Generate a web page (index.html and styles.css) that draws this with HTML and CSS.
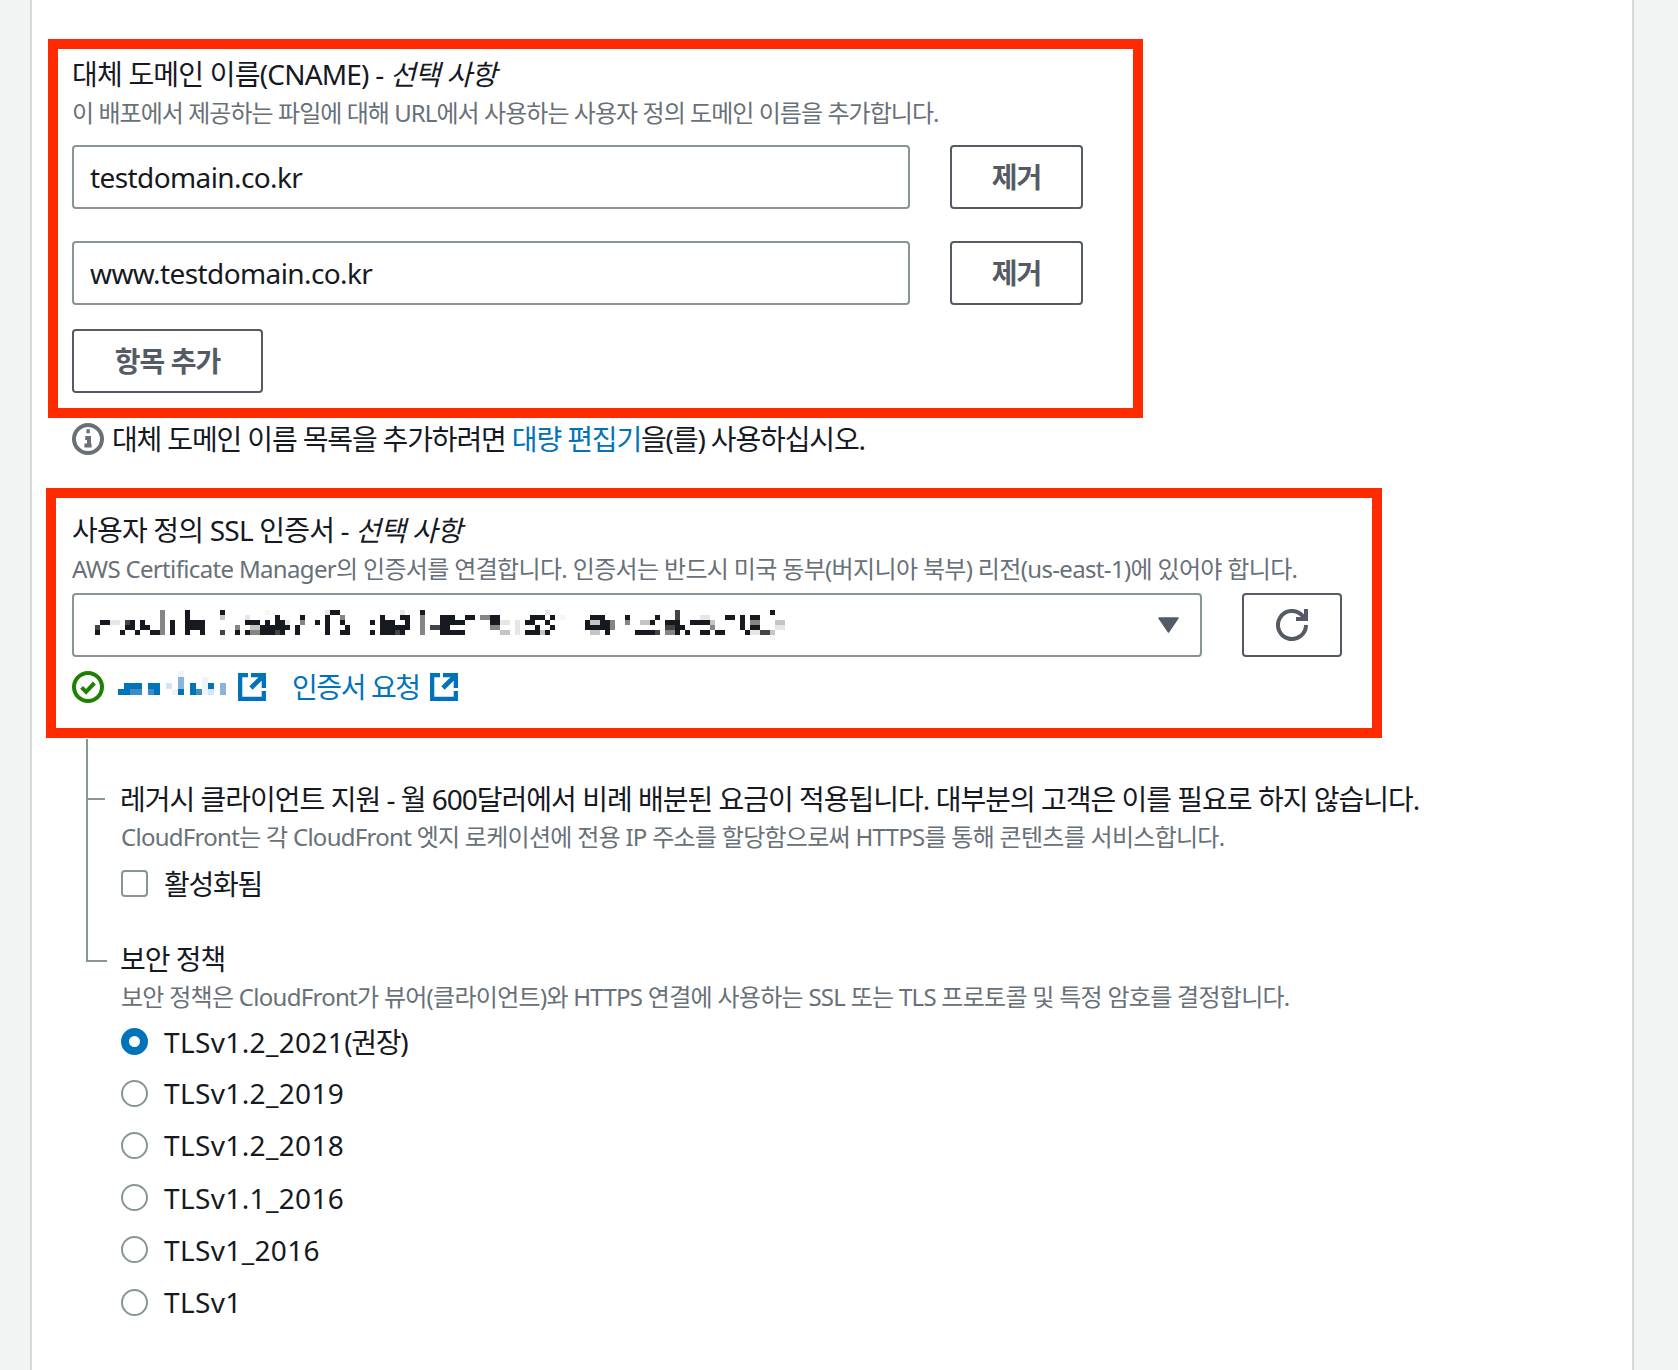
FILE: index.html
```html
<!DOCTYPE html>
<html lang="ko">
<head>
    <meta charset="UTF-8" />
    <title>CloudFront 배포 설정</title>
    <link rel="stylesheet" href="styles.css">
</head>
<body>
    <div class="panel">
        <section class="mark mark-cname">
            <div class="label">대체 도메인 이름(CNAME) - <i>선택 사항</i></div>
            <div class="desc">이 배포에서 제공하는 파일에 대해 URL에서 사용하는 사용자 정의 도메인 이름을 추가합니다.</div>
            <div class="cname-row">
                <input class="text-input" type="text" value="testdomain.co.kr">
                <button class="btn btn-remove">제거</button>
            </div>
            <div class="cname-row">
                <input class="text-input" type="text" value="www.testdomain.co.kr">
                <button class="btn btn-remove">제거</button>
            </div>
            <button class="btn btn-add">항목 추가</button>
        </section>

        <div class="info-row">
            <svg class="icon" viewBox="0 0 16 16" fill="none" stroke="#687078" stroke-width="2">
                <circle cx="8" cy="8" r="7" />
                <path d="M6.6 7.5h1.9v3.6 M6.2 11.3h3.6 M7.2 4.1h1.7" />
            </svg>
            <span class="info-text">대체 도메인 이름 목록을 추가하려면 <a href="#">대량 편집기</a>을(를) 사용하십시오.</span>
        </div>

        <section class="mark mark-ssl">
            <div class="label">사용자 정의 SSL 인증서 - <i>선택 사항</i></div>
            <div class="desc">AWS Certificate Manager의 인증서를 연결합니다. 인증서는 반드시 미국 동부(버지니아 북부) 리전(us-east-1)에 있어야 합니다.</div>
            <div class="select-row">
                <div class="select">
                    <svg class="mosaic-dark" viewBox="0 0 144 9" shape-rendering="crispEdges">
                        <path fill="#16191f" d="M3 4h2v1h-2z M2 6h1v1h-1z M9 4h1v2h-1z M8 5h2v1h-2z M11 4h1v1h-1z M11 5h2v1h-2z M7 6h1v1h-1z M10 6h1v1h-1z M13 6h2v1h-2z M17 4h1v3h-1z M20 2h1v5h-1z M21 4h3v2h-3z M23 6h1v1h-1z M27 2h1v1h-1z M30 6h1v1h-1z M32 4h3v1h-3z M32 6h1v1h-1z M35 6h3v1h-3z M36 4h1v1h-1z M35 5h4v1h-4z M38 3h1v1h-1z M38 4h2v1h-2z M39 5h2v1h-2z M39 6h1v1h-1z M43 3h1v1h-1z M42 5h1v2h-1z M46 4h1v1h-1z M49 2h2v1h-2z M48 3h1v4h-1z M51 4h1v1h-1z M52 5h1v1h-1z M51 6h2v1h-2z M57 4h1v1h-1z M57 6h1v1h-1z M59 3h1v1h-1z M63 3h2v1h-2z M59 4h3v1h-3z M64 4h1v1h-1z M59 5h6v1h-6z M59 6h3v1h-3z M63 6h1v1h-1z M67 2h1v1h-1z M71 3h1v4h-1z M72 3h2v1h-2z M76 3h2v1h-2z M81 3h2v1h-2z M72 4h4v1h-4z M72 5h1v1h-1z M72 6h4v1h-4z M81 4h2v2h-2z M89 3h3v1h-3z M93 3h1v1h-1z M88 4h2v1h-2z M92 4h1v1h-1z M90 5h1v1h-1z M93 5h1v1h-1z M88 6h3v1h-3z M92 6h1v1h-1z M101 3h3v1h-3z M100 4h1v1h-1z M103 4h2v1h-2z M100 5h5v1h-5z M104 6h1v1h-1z M108 3h1v1h-1z M114 3h1v1h-1z M113 4h1v1h-1z M110 6h4v1h-4z M116 4h3v1h-3z M118 5h2v1h-2z M118 6h1v1h-1z M120 6h1v1h-1z M123 6h2v1h-2z M126 6h2v1h-2z M121 4h4v1h-4z M128 3h2v1h-2z M131 3h1v3h-1z M133 3h2v1h-2z M133 5h2v1h-2z M132 6h1v1h-1z M137 2h1v1h-1z" />
                        <path fill="#444" d="M2 5h1v1h-1z M8 4h1v1h-1z M27 6h1v1h-1z M38 6h1v1h-1z M62 6h1v1h-1z M69 5h2v1h-2z M118 2h1v2h-1z M116 5h2v1h-2z M135 6h2v1h-2z M114 6h1v1h-1z" />
                        <path fill="#858585" d="M15 2h1v5h-1z M30 5h1v1h-1z M33 6h2v1h-2z M43 4h1v1h-1z M51 3h1v1h-1z M67 3h1v4h-1z M79 3h2v1h-2z M108 4h1v1h-1z M105 4h1v2h-1z M81 5h2v1h-2z M116 6h2v1h-2z M125 5h1v1h-1z M133 4h2v1h-2z" />
                        <path fill="#c4c4c4" d="M27 3h1v1h-1z M33 5h2v1h-2z M111 4h2v1h-2z M101 4h2v1h-2z M101 6h2v1h-2z M83 6h2v1h-2z M91 6h1v1h-1z M125 4h1v1h-1z M137 6h1v1h-1z M138 4h2v1h-2z" />
                        <path fill="#e6e6e6" d="M5 4h2v1h-2z M32 3h1v1h-1z M40 4h1v1h-1z M48 2h1v1h-1z M63 2h1v1h-1z M86 4h1v3h-1z M92 2h1v1h-1z M83 4h2v1h-2z M123 3h2v1h-2z M133 6h2v1h-2z M138 5h2v1h-2z" />
                        <path fill="#f6f6f6" d="M27 7h1v1h-1z M36 2h1v1h-1z M95 3h1v1h-1z M131 2h1v1h-1z M137 7h1v1h-1z" />
                    </svg>
                    <svg class="caret" viewBox="0 0 21 16"><path fill="#545b64" d="M1 1h19l-9.5 14z" stroke="#545b64" stroke-width="1.5" stroke-linejoin="round" /></svg>
                </div>
                <button class="btn btn-refresh">
                    <svg class="icon" viewBox="0 0 16 16" fill="none" stroke="#545b64" stroke-width="2">
                        <path d="M10 5h5V0 M15 8a7 7 0 1 1-1.9-4.8L15 5" />
                    </svg>
                </button>
            </div>
            <div class="link-row">
                <svg class="icon" viewBox="0 0 16 16" fill="none" stroke="#1d8102" stroke-width="2">
                    <circle cx="8" cy="8" r="7" />
                    <path d="M4.8 8.2l2.2 2.2 4.2-4.4" />
                </svg>
                <svg class="mosaic-blue" viewBox="0 0 19 4" shape-rendering="crispEdges">
                    <path fill="#0073bb" d="M1 2h3v1h-3z M5 2h2v1h-2z M12 2h1v1h-1z M15 2h1v1h-1z M0 3h2v1h-2z M6 3h1v1h-1z M10 3h1v1h-1z M12 3h1v1h-1z" />
                    <path fill="#3d8cc9" d="M2 3h2v1h-2z M5 3h1v1h-1z M13 3h1v1h-1z" />
                    <path fill="#8ab4d9" d="M10 1h1v1h-1z M10 2h1v1h-1z M17 2h1v2h-1z" />
                    <path fill="#d5e4f2" d="M8 2h1v1h-1z M15 3h1v1h-1z" />
                    <path fill="#eef4fa" d="M14 2h1v2h-1z M9 3h1v1h-1z M10 0h1v1h-1z M14 1h1v1h-1z" />
                </svg>
                <svg class="icon-ext" viewBox="1 1 14 14" fill="none" stroke="#0073bb" stroke-width="2.3">
                    <path d="M14 8.5V2H7.5 M14 2L7.5 8.5 M6 2H2v12h12v-4" />
                </svg>
                <a class="req-link" href="#">인증서 요청</a>
                <svg class="icon-ext" viewBox="1 1 14 14" fill="none" stroke="#0073bb" stroke-width="2.3">
                    <path d="M14 8.5V2H7.5 M14 2L7.5 8.5 M6 2H2v12h12v-4" />
                </svg>
            </div>
        </section>

        <div class="tree">
            <div class="tree-item tree-first">
                <div class="label">레거시 클라이언트 지원 - 월 600달러에서 비례 배분된 요금이 적용됩니다. 대부분의 고객은 이를 필요로 하지 않습니다.</div>
                <div class="desc">CloudFront는 각 CloudFront 엣지 로케이션에 전용 IP 주소를 할당함으로써 HTTPS를 통해 콘텐츠를 서비스합니다.</div>
                <div class="choice check-row"><span class="checkbox"></span>활성화됨</div>
            </div>
            <div class="tree-item tree-last">
                <div class="label">보안 정책</div>
                <div class="desc">보안 정책은 CloudFront가 뷰어(클라이언트)와 HTTPS 연결에 사용하는 SSL 또는 TLS 프로토콜 및 특정 암호를 결정합니다.</div>
                <div class="radio-list">
                    <div class="choice"><span class="radio radio-on"></span><span>TLSv1.2_2021<span class="ko">(권장)</span></span></div>
                    <div class="choice"><span class="radio"></span>TLSv1.2_2019</div>
                    <div class="choice"><span class="radio"></span>TLSv1.2_2018</div>
                    <div class="choice"><span class="radio"></span>TLSv1.1_2016</div>
                    <div class="choice"><span class="radio"></span>TLSv1_2016</div>
                    <div class="choice"><span class="radio"></span>TLSv1</div>
                </div>
            </div>
        </div>
    </div>
</body>
</html>
```

FILE: styles.css
```css
* {
    box-sizing: border-box;
}

body {
    margin: 0;
    background-color: #f2f3f3;
    font-family: "Noto Sans", "Noto Sans CJK KR", sans-serif;
    font-size: 28px;
    color: #16191f;
    height: 1370px;
    overflow: hidden;
}

a {
    color: #0073bb;
    text-decoration: none;
}

.panel {
    margin-left: 30px;
    width: 1604px;
    height: 1370px;
    padding-top: 39px;
    background-color: #fff;
    border-left: 2px solid #d5dbdb;
    border-right: 2px solid #d5dbdb;
}

.mark {
    border: 10px solid #ff2a00;
}

.mark-cname {
    margin-left: 16px;
    width: 1095px;
    height: 379px;
    padding: 5px 0 0 14px;
}

.mark-ssl {
    margin: 33px 0 0 14px;
    width: 1336px;
    height: 250px;
    padding: 12px 0 0 16px;
}

.label {
    height: 40px;
    line-height: 40px;
    letter-spacing: -0.8px;
    white-space: nowrap;
}

.desc {
    height: 36px;
    line-height: 36px;
    font-size: 24px;
    letter-spacing: -0.72px;
    color: #687078;
    white-space: nowrap;
}

.mark-cname .desc {
    margin-bottom: 15px;
    line-height: 38px;
    letter-spacing: -0.95px;
}

.mark-ssl .desc {
    margin-bottom: 7px;
    line-height: 38px;
    letter-spacing: -0.66px;
}

.cname-row {
    display: flex;
    gap: 40px;
    margin-bottom: 32px;
}

.text-input {
    width: 838px;
    height: 64px;
    padding: 0 16px;
    border: 2px solid #879596;
    border-radius: 4px;
    font: inherit;
    letter-spacing: -0.6px;
    color: #16191f;
    background-color: #fff;
}

.btn {
    display: block;
    height: 64px;
    padding: 0 0 2px;
    border: 2px solid #545b64;
    border-radius: 4px;
    background-color: #fff;
    font: inherit;
    font-weight: 700;
    letter-spacing: -1px;
    color: #545b64;
}

.btn-remove {
    width: 133px;
}

.btn-add {
    width: 191px;
    margin-top: -8px;
}

.btn-refresh {
    width: 100px;
    padding: 0;
    display: flex;
    align-items: center;
    justify-content: center;
}

.icon {
    display: block;
    flex: none;
    width: 32px;
    height: 32px;
}

.icon-ext {
    display: block;
    flex: none;
    width: 28px;
    height: 28px;
}

.info-row {
    display: flex;
    align-items: center;
    gap: 8px;
    height: 32px;
    margin: 5px 0 0 40px;
    white-space: nowrap;
}

.info-text {
    padding-bottom: 2px;
    letter-spacing: -1.15px;
}

.select-row {
    display: flex;
    gap: 40px;
}

.select {
    display: flex;
    justify-content: space-between;
    align-items: center;
    width: 1130px;
    height: 64px;
    padding: 0 21px 0 11px;
    border: 2px solid #879596;
    border-radius: 4px;
}

.mosaic-dark {
    display: block;
    align-self: flex-start;
    margin-top: 5px;
    width: 720px;
    height: 45px;
}

.caret {
    display: block;
    width: 21px;
    height: 16px;
}

.link-row {
    display: flex;
    align-items: center;
    height: 32px;
    margin-top: 14px;
}

.mosaic-blue {
    display: block;
    align-self: flex-start;
    width: 114px;
    height: 24px;
    margin: 0 6px 0 14px;
}

.req-link {
    margin: 0 10px 0 26px;
    padding-bottom: 2px;
    letter-spacing: -1.4px;
}

.tree {
    margin: 1px 0 0 54px;
}

.tree-item {
    position: relative;
    padding-left: 33px;
}

.tree-item .label {
    margin-left: -1px;
    letter-spacing: -1px;
}

.tree-first {
    height: 200px;
    padding-top: 40px;
    border-left: 2px solid #879596;
}

.tree-last {
    padding-left: 35px;
}

.tree-first::before,
.tree-last::before {
    content: "";
    position: absolute;
    border-bottom: 2px solid #879596;
}

.tree-first::before {
    left: 0;
    top: 59px;
    width: 17px;
}

.tree-last::before {
    left: 0;
    top: 0;
    height: 21px;
    border-left: 2px solid #879596;
    width: 19px;
}

.choice {
    display: flex;
    align-items: center;
    gap: 16px;
    height: 52.2px;
    letter-spacing: 0.36px;
    white-space: nowrap;
}

.check-row {
    height: 40px;
    margin-top: 8px;
    letter-spacing: -1.3px;
}

.ko {
    letter-spacing: -1.3px;
}

.radio-list {
    margin-top: 0;
}

.checkbox,
.radio {
    display: block;
    flex: none;
    width: 27px;
    height: 27px;
    border: 2px solid #879596;
    background-color: #fff;
}

.checkbox {
    border-radius: 4px;
}

.radio {
    border-radius: 50%;
}

.radio-on {
    border: 8px solid #0073bb;
}
```
